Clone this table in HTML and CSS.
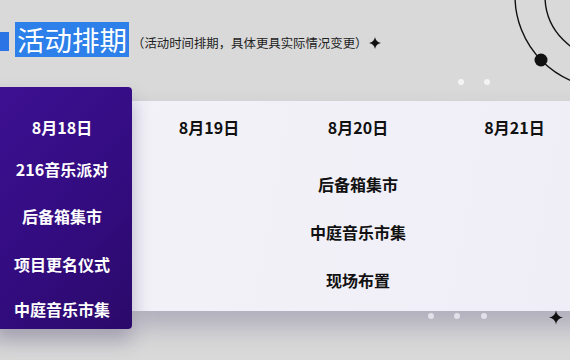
FILE: index.html
```html
<!DOCTYPE html>
<html lang="zh">
<head>
<meta charset="utf-8">
<title>活动排期</title>
<link rel="stylesheet" href="styles.css">
</head>
<body>
<div class="page">
  <header class="head">
    <span class="marker"></span>
    <h1 class="title">活动排期</h1>
    <span class="sub">（活动时间排期，具体更具实际情况变更）</span>
    <svg class="star-small" width="12" height="12" viewBox="-6 -6 12 12"><path d="M0,-6 Q0.8,-0.8 6,0 Q0.8,0.8 0,6 Q-0.8,0.8 -6,0 Q-0.8,-0.8 0,-6Z" fill="#111"/></svg>
  </header>
  <section class="board">
    <div class="card">
      <div class="card-item">8月18日</div>
      <div class="card-item">216音乐派对</div>
      <div class="card-item">后备箱集市</div>
      <div class="card-item">项目更名仪式</div>
      <div class="card-item">中庭音乐市集</div>
    </div>
    <div class="panel">
      <div class="date">8月19日</div>
      <div class="date">8月20日</div>
      <div class="date">8月21日</div>
      <div class="events">
        <div class="event">后备箱集市</div>
        <div class="event">中庭音乐市集</div>
        <div class="event">现场布置</div>
      </div>
    </div>
  </section>
  <svg class="decor" width="570" height="360" viewBox="0 0 570 360">
    <circle cx="607" cy="-4" r="92" fill="none" stroke="#111" stroke-width="1.4"/>
    <circle cx="607" cy="-4" r="62" fill="none" stroke="#111" stroke-width="1.4"/>
    <circle cx="541" cy="60" r="6.5" fill="#111"/>
    <circle cx="461" cy="82" r="3" fill="#f4f4f6"/>
    <circle cx="487" cy="82" r="3" fill="#f4f4f6"/>
    <circle cx="431" cy="316" r="3" fill="#e2e0e8"/>
    <circle cx="457" cy="316" r="3" fill="#e2e0e8"/>
    <circle cx="484" cy="316" r="3" fill="#e2e0e8"/>
    <path transform="translate(556 317.5)" d="M0,-7 Q0.9,-0.9 7,0 Q0.9,0.9 0,7 Q-0.9,0.9 -7,0 Q-0.9,-0.9 0,-7Z" fill="#111"/>
  </svg>
</div>
</body>
</html>
```
FILE: styles.css
```css
* { box-sizing: border-box; }
html, body { margin: 0; padding: 0; }
body {
  background: #d9d9d9;
  font-family: "Noto Sans CJK SC", "Noto Sans", sans-serif;
}
.page {
  position: relative;
  width: 570px;
  height: 360px;
  overflow: hidden;
  background: #d9d9d9;
}
.head {
  display: flex;
  align-items: flex-start;
  padding-top: 22px;
  height: 57px;
}
.marker {
  width: 9px;
  height: 19px;
  margin-top: 10px;
  background: #2a74e6;
}
.title {
  margin: 0 0 0 6px;
  padding: 0 2px;
  height: 35px;
  font-size: 27.5px;
  line-height: 35px;
  font-weight: 400;
  color: #fff;
  background: #2d7fe9;
}
.sub {
  margin: 13px 0 0 3px;
  font-size: 12.4px;
  line-height: 16px;
  color: #222;
}
.star-small {
  margin: 15px 0 0 2px;
}
.board {
  display: flex;
  align-items: flex-start;
  margin-top: 30px;
}
.card {
  position: relative;
  z-index: 1;
  flex: none;
  width: 140px;
  height: 242px;
  margin-left: -8px;
  padding-top: 18.5px;
  border-radius: 0 4px 4px 0;
  background: linear-gradient(135deg, #3d1092 0%, #330c80 55%, #2b0a6a 100%);
  box-shadow: 0 12px 20px rgba(40, 25, 80, 0.3);
  display: grid;
  grid-template-rows: 42px 42px 53px 43px 46px;
  align-content: start;
  justify-items: center;
  align-items: center;
}
.card-item {
  font-size: 16px;
  line-height: 22px;
  font-weight: 700;
  color: #fff;
  white-space: nowrap;
}
.panel {
  flex: none;
  width: 467px;
  height: 210px;
  margin-top: 14px;
  padding-top: 14.5px;
  background: linear-gradient(100deg, #f3f2f8 0%, #efedf6 100%);
  box-shadow: 0 16px 24px rgba(70, 60, 110, 0.28);
  display: grid;
  grid-template-columns: 154px 144px 169px;
  grid-template-rows: 22px auto;
  align-content: start;
}
.date {
  text-align: center;
  font-size: 16px;
  line-height: 22px;
  font-weight: 700;
  color: #111;
}
.events {
  grid-column: 2;
  margin-top: 35px;
  display: flex;
  flex-direction: column;
  align-items: center;
  gap: 26px;
}
.event {
  font-size: 16px;
  line-height: 22px;
  font-weight: 700;
  color: #111;
  white-space: nowrap;
}
.decor {
  position: absolute;
  left: 0;
  top: 0;
  pointer-events: none;
}
```
